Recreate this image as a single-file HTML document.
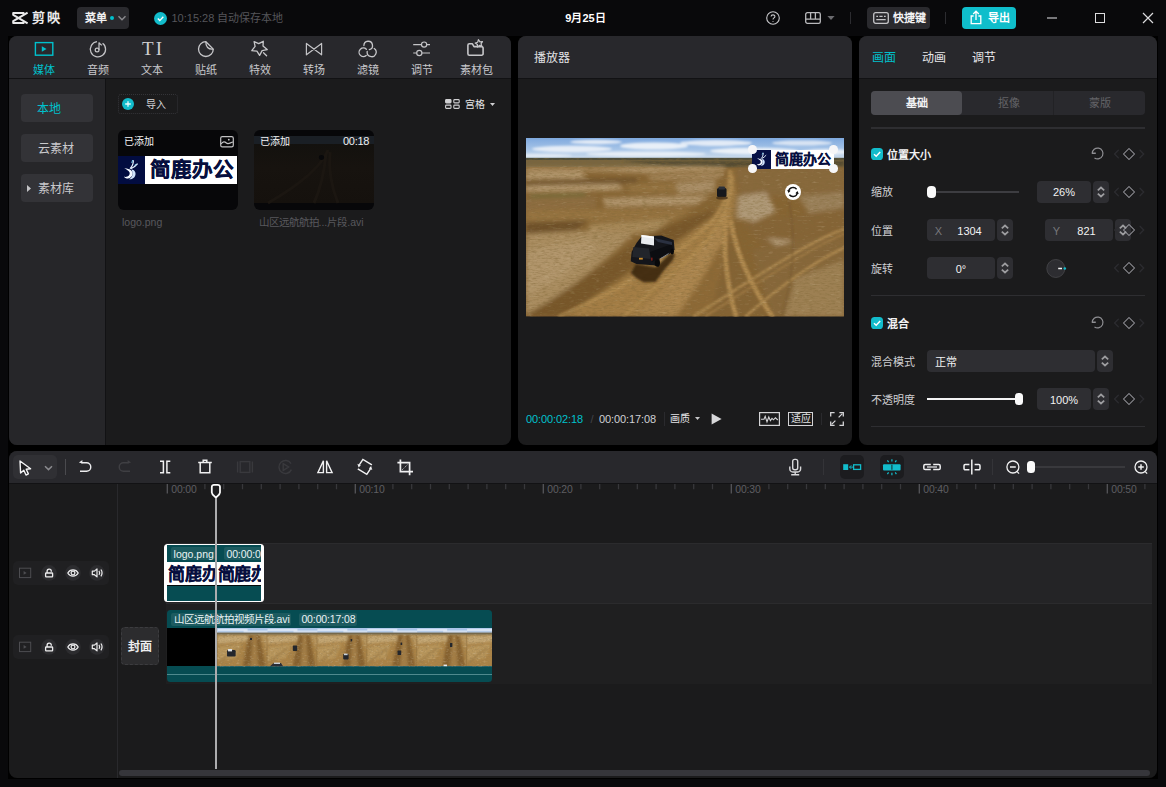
<!DOCTYPE html>
<html lang="zh-CN">
<head>
<meta charset="utf-8">
<title>剪映</title>
<style>
*{box-sizing:border-box;margin:0;padding:0}
html,body{width:1166px;height:787px;overflow:hidden;background:#09090b}
body{font-family:"Liberation Sans",sans-serif;font-size:11px;color:#d8d8da;position:relative;-webkit-font-smoothing:antialiased}
.abs{position:absolute}
.t{position:absolute;white-space:nowrap;line-height:14px;height:14px}
.c{transform:translateX(-50%)}
svg{position:absolute;overflow:visible}
.panel{position:absolute;background:#1b1b1c;border-radius:8px;overflow:hidden}
.phead{position:absolute;left:0;top:0;right:0;height:43px;background:#28282c;border-bottom:1px solid #121214}
.btn{position:absolute;background:#2a2a2e;border-radius:4px}
.sep{position:absolute;width:1px;background:#2c2c30}
.b{font-weight:bold}
.cy{color:#00c1cd}
.w{color:#f2f2f3}
.tl{color:#c9c9cc}
.hd{position:absolute;width:8.6px;height:8.6px;border-radius:50%;background:#f6f6f8}
.lb{color:#cfcfd2}
.ib{position:absolute;height:21.8px;background:#2e2e32;border-radius:4px}
.st{position:absolute;width:16px;height:21.8px;background:#2e2e32;border-radius:4px}
/*SECTION-CSS*/
</style>
</head>
<body>
<!-- ===== TITLE BAR ===== -->
<div id="titlebar" class="abs" style="left:0;top:0;width:1166px;height:36px">
<svg style="left:11px;top:11px" width="18" height="14" viewBox="11 11 18 14" fill="none" stroke="#e9e9ea" stroke-width="2" stroke-linejoin="round" stroke-linecap="butt"><path d="M27.6 12.6 L13.2 21.2 V23 H23.6 V21.4"/><path d="M27.6 23.4 L13.2 14.8 V13 H23.6 V14.6"/></svg>
<div class="t b" style="left:31.5px;top:10px;font-size:13px;line-height:16px;height:16px;letter-spacing:2.2px;color:#e9e9ea">剪映</div>
<div class="btn" style="left:77px;top:7px;width:52px;height:22px"></div>
<div class="t b w" style="left:85px;top:11px">菜单</div>
<div class="abs" style="left:110px;top:16px;width:4px;height:4px;border-radius:2px;background:#00c1cd"></div>
<svg style="left:117px;top:14px" width="10" height="8" viewBox="0 0 10 8" fill="none" stroke="#8a8a8e" stroke-width="1.5"><path d="M1.5 2.3 L5 5.7 L8.5 2.3"/></svg>
<svg style="left:154px;top:12px" width="13" height="13" viewBox="0 0 13 13"><circle cx="6.5" cy="6.5" r="6.5" fill="#12bccb"/><path d="M3.8 6.6 L5.8 8.6 L9.3 4.8" fill="none" stroke="#fff" stroke-width="1.4"/></svg>
<div class="t" style="left:171.5px;top:11px;color:#55555a">10:15:28 自动保存本地</div>
<div class="t b c" style="left:585.5px;top:11px;color:#fff">9月25日</div>
<!-- help -->
<svg style="left:766px;top:11px" width="14" height="14" viewBox="0 0 14 14" fill="none" stroke="#c9c9cc" stroke-width="1.1"><circle cx="7" cy="7" r="6.3"/><path d="M5.1 5.6 C5.1 3.3 8.9 3.3 8.9 5.5 C8.9 7 7 6.9 7 8.6" /><circle cx="7" cy="10.5" r=".55" fill="#c9c9cc" stroke="none"/></svg>
<!-- layout -->
<svg style="left:805px;top:12px" width="16" height="12" viewBox="0 0 16 12" fill="none" stroke="#b9b9bc" stroke-width="1.3"><rect x=".7" y=".7" width="14.6" height="10.6" rx="1.6"/><path d="M.7 7.2 H15.3 M5.6 .7 V7.2 M10.4 .7 V7.2"/></svg>
<svg style="left:827px;top:16px" width="8" height="4" viewBox="0 0 8 4"><path d="M.4 0 H7.6 L4 4Z" fill="#6a6a6e"/></svg>
<div class="sep" style="left:850px;top:12px;height:12px"></div>
<div class="btn" style="left:867px;top:7px;width:63px;height:22px"></div>
<svg style="left:873px;top:12px" width="16" height="12" viewBox="0 0 16 12" fill="none" stroke="#c4c4c7" stroke-width="1.3"><rect x=".7" y=".7" width="14.6" height="10.6" rx="2"/><path d="M3.3 4.3 H5 M6.4 4.3 H9.6 M11 4.3 H12.7 M3.3 7.6 H12.7"/></svg>
<div class="t b w" style="left:892.5px;top:11px">快捷键</div>
<div class="sep" style="left:945px;top:12px;height:12px"></div>
<div class="btn" style="left:962px;top:7px;width:54px;height:22px;background:#0fbecb"></div>
<svg style="left:970px;top:10px" width="12" height="15" viewBox="0 0 12 15" fill="none" stroke="#fff" stroke-width="1.3"><path d="M3.6 6 H1.2 V13.6 H10.8 V6 H8.4"/><path d="M6 10 V1.4 M3.2 4 L6 1.2 L8.8 4"/></svg>
<div class="t b" style="left:987.5px;top:11px;color:#fff">导出</div>
<div class="abs" style="left:1047px;top:17px;width:10px;height:1.5px;background:#77777a"></div>
<div class="abs" style="left:1095px;top:13px;width:10px;height:10px;border:1.3px solid #dcdcde"></div>
<svg style="left:1143px;top:13px" width="10" height="10" viewBox="0 0 10 10" stroke="#dcdcde" stroke-width="1.2"><path d="M0 0 L10 10 M10 0 L0 10"/></svg>

</div>

<div class="abs" style="left:8px;top:36px;width:1150px;height:743px;background:#000"></div>
<!-- ===== MEDIA PANEL ===== -->
<div id="media" class="panel" style="left:9px;top:36px;width:502px;height:409px">
<div class="phead"></div>
<div class="abs" style="left:-9px;top:-36px;width:1166px;height:787px">
<!-- sidebar -->
<div class="abs" style="left:9px;top:79px;width:96px;height:366px;background:#262629"></div>
<div class="abs" style="left:105px;top:79px;width:1px;height:366px;background:#121214"></div>
<!-- tab icons -->
<svg style="left:34px;top:41px" width="20" height="16" viewBox="34 41 20 16" fill="none" stroke="#00c1cd" stroke-width="1.4"><rect x="35.4" y="42.6" width="17.4" height="12.6"/><path d="M41.8 46.3 L46.5 49 L41.8 51.7Z" fill="#00c1cd" stroke="none"/></svg>
<svg style="left:89px;top:40px" width="18" height="18" viewBox="89 40 18 18" fill="none" stroke="#c3c3c6" stroke-width="1.25"><path d="M102.6 43.2 A7.6 7.6 0 1 1 97 41.7"/><circle cx="97.1" cy="50" r="1.9"/><path d="M99 50 V42.6 C99.6 44 101 44.2 101.8 45.4"/></svg>
<div class="t c" style="left:152px;top:38px;font-family:'Liberation Serif',serif;font-size:19px;line-height:22px;height:22px;letter-spacing:2px;color:#cfcfd1;padding-left:2px">TI</div>
<svg style="left:197px;top:40px" width="18" height="18" viewBox="197 40 18 18" fill="none" stroke="#c6c6c9" stroke-width="1.3" stroke-linejoin="round"><path d="M213.3 49.1 A7.4 7.4 0 1 1 205.9 41.7 L213.3 49.1"/><path d="M205.9 41.7 C205.6 46.8 208.2 49.7 213.3 49.1"/></svg>
<svg style="left:250px;top:40px" width="18" height="18" viewBox="250 40 18 18" fill="none" stroke="#c6c6c9" stroke-width="1.3" stroke-linejoin="round" stroke-linecap="round"><path d="M254.1 41.6 L258.7 43.7 L263.3 41.3 L263 46.1 L267.2 49.6 L262.1 50.6 L259.6 55.4 L256.9 51.2 L251.8 50.6 L255.1 46.4 Z"/><path d="M263.5 52.7 L266.6 55.8"/></svg>
<svg style="left:305px;top:42px" width="18" height="14" viewBox="305 42 18 14" fill="none" stroke="#c3c3c6" stroke-width="1.2" stroke-linejoin="round"><path d="M306.4 43.4 L321.6 54.8 V43.4 L306.4 54.8 Z"/></svg>
<svg style="left:358px;top:40px" width="20" height="18" viewBox="358 40 20 18" fill="none" stroke="#c6c6c9" stroke-width="1.3" stroke-linecap="round"><path d="M363.9 45.5 A4.3 4.3 0 1 1 369.3 49.7"/><path d="M366.4 49.2 A4.3 4.3 0 1 0 366.2 55.5"/><path d="M367.2 51.4 A4.5 4.5 0 1 0 374.2 48.5"/></svg>
<svg style="left:412px;top:41px" width="20" height="16" viewBox="412 41 20 16" fill="none" stroke="#c3c3c6" stroke-width="1.2"><path d="M413.2 44.6 H421.4 M426.8 44.6 H430 M413.2 53 H416.6 M422 53 H430"/><circle cx="424.1" cy="44.6" r="2.6"/><circle cx="419.3" cy="53" r="2.6"/></svg>
<svg style="left:466px;top:39px" width="20" height="18" viewBox="466 39 20 18" fill="none" stroke="#c6c6c9" stroke-width="1.6" stroke-linejoin="round"><path d="M469.4 43.8 H472.4 L474 46.6 H481.6 A1.5 1.5 0 0 1 483.1 48.1 V53.7 A1.5 1.5 0 0 1 481.6 55.2 H469.4 A1.5 1.5 0 0 1 467.9 53.7 V45.3 A1.5 1.5 0 0 1 469.4 43.8 Z"/><path d="M478.4 39.7 L479.9 41.8 L482.5 41.7 L481.0 43.8 L481.9 46.2 L479.4 45.4 L477.4 47.0 L477.4 44.4 L475.2 43.0 L477.7 42.2Z" fill="#28282c" stroke-width="1.2"/></svg>
<!-- tab labels -->
<div class="t c cy" style="left:44px;top:62.6px">媒体</div>
<div class="t c tl" style="left:97.5px;top:62.6px">音频</div>
<div class="t c tl" style="left:152px;top:62.6px">文本</div>
<div class="t c tl" style="left:206px;top:62.6px">贴纸</div>
<div class="t c tl" style="left:260px;top:62.6px">特效</div>
<div class="t c tl" style="left:314px;top:62.6px">转场</div>
<div class="t c tl" style="left:368px;top:62.6px">滤镜</div>
<div class="t c tl" style="left:422px;top:62.6px">调节</div>
<div class="t c tl" style="left:476px;top:62.6px">素材包</div>
<!-- sidebar buttons -->
<div class="btn" style="left:21px;top:94px;width:72px;height:28px;background:#333337"></div>
<div class="btn" style="left:21px;top:134px;width:72px;height:28px;background:#333337"></div>
<div class="btn" style="left:21px;top:174px;width:72px;height:28px;background:#333337"></div>
<div class="t cy" style="left:37px;top:102px;font-size:12px">本地</div>
<div class="t" style="left:37.5px;top:142px;font-size:12px;color:#c9c9cc">云素材</div>
<div class="t" style="left:37.5px;top:182px;font-size:12px;color:#c9c9cc">素材库</div>
<svg style="left:27px;top:185px" width="4" height="7" viewBox="0 0 4 7"><path d="M0 0 L4 3.5 L0 7Z" fill="#c4c4c7"/></svg>
<!-- import -->
<div class="abs" style="left:118px;top:94px;width:60px;height:20px;border:1px dotted #343438;border-radius:3px"></div>
<svg style="left:122px;top:98px" width="12" height="12" viewBox="0 0 12 12"><circle cx="6" cy="6" r="6" fill="#12bccb"/><path d="M6 3.2 V8.8 M3.2 6 H8.8" stroke="#e8fbfc" stroke-width="1.3"/></svg>
<div class="t" style="left:146px;top:97.8px;font-size:10px;color:#d4d4d6">导入</div>
<!-- grid toggle -->
<svg style="left:445px;top:99px" width="15" height="10" viewBox="0 0 15 10" fill="none" stroke="#d0d0d2" stroke-width="1.1"><rect x=".6" y=".6" width="5.4" height="3.3" rx=".8" fill="#d0d0d2"/><rect x="8.8" y=".6" width="5.4" height="3.3" rx=".8"/><rect x=".6" y="6.1" width="5.4" height="3.3" rx=".8"/><rect x="8.8" y="6.1" width="5.4" height="3.3" rx=".8"/></svg>
<div class="t" style="left:465px;top:97.5px;font-size:10px;color:#e4e4e6">宫格</div>
<svg style="left:489.5px;top:103px" width="5" height="3" viewBox="0 0 5 3"><path d="M0 0 H5 L2.5 3Z" fill="#d0d0d2"/></svg>
<!-- thumb 1 -->
<div class="abs" style="left:118px;top:130px;width:120px;height:80px;border-radius:6px;background:#070709;overflow:hidden">
  <div class="abs" style="left:0;top:26px;width:27px;height:27.6px;background:#020c40"></div>
  <div class="abs" style="left:27px;top:26px;width:92px;height:27.6px;background:#fff"></div>
  <svg style="left:5px;top:28.5px" width="17" height="22" viewBox="0 0 17 22" fill="none"><path d="M1.2 9 C4.5 9.6 7 10.2 8.2 11.4 C11 13.6 9.8 18.6 4.6 19.6 C2.8 19.8 1.6 18.8 .8 17.6 C3.6 18.6 7.4 17 6.6 13.6 C6 11.6 3.4 10.6 1.2 9Z" fill="#f4f8ff"/><path d="M8.4 10.4 C12.4 10.6 13.8 15 11.4 18.2 C10.2 19.6 8 20.4 6 20.2 C9.6 18.4 10.6 14.4 8.4 10.4Z" fill="#cfe2fb"/><path d="M7 9.6 C9 7.6 10.4 5 10.4 1.2 M7.8 9.8 C10.4 8.6 12.8 7 14.6 4.6" stroke="#e6f2ff" stroke-width="1.2"/><path d="M8.8 4 L9.6 1 M11.4 6.4 L13.4 5.2" stroke="#7fd0f2" stroke-width="1"/></svg>
  <div class="t" style="left:32px;top:26px;font-size:20.6px;line-height:27px;height:27px;font-weight:900;color:#070f3e;letter-spacing:-0.1px;-webkit-text-stroke:.35px #070f3e">简鹿办公</div>
  <div class="t" style="left:5.5px;top:4.5px;font-size:10px;color:#f4f4f5">已添加</div>
  <svg style="left:102px;top:5.5px" width="14" height="12" viewBox="0 0 14 12" fill="none" stroke="#c2c2c4" stroke-width="1.2"><rect x=".7" y=".7" width="12.6" height="10.2" rx="1.6"/><path d="M1 8 C3 5.4 4.6 5.4 6.4 7 C8.2 8.6 10 6.8 13 6"/><circle cx="8.8" cy="3.7" r=".9" fill="#c2c2c4" stroke="none"/></svg>
</div>
<div class="t" style="left:122px;top:215px;font-size:10.5px;color:#58585c">logo.png</div>
<!-- thumb 2 -->
<div class="abs" style="left:254px;top:130px;width:120px;height:80px;border-radius:6px;background:#070709;overflow:hidden">
  <div class="abs" style="left:0;top:5.8px;width:120px;height:8.2px;background:#1a1f25"></div>
  <div class="abs" style="left:0;top:14px;width:120px;height:59px;background:linear-gradient(180deg,#13110e 0%,#17130f 40%,#15110d 100%)"></div>
  <svg style="left:0;top:14px" width="120" height="59" viewBox="0 0 120 59" fill="none"><path d="M74 6 C66 26 40 44 14 59 M76 8 C74 28 78 44 84 59 M72 10 C70 30 66 46 60 59" stroke="#1b1611" stroke-width="3"/><ellipse cx="67.5" cy="13.5" rx="2.6" ry="2.4" fill="#08080a"/></svg>
  <div class="t" style="left:5.5px;top:4.5px;font-size:10px;color:#f4f4f5">已添加</div>
  <div class="t" style="left:89px;top:4px;font-size:11px;color:#f0f0f2;letter-spacing:-0.3px">00:18</div>
</div>
<div class="t" style="left:258.5px;top:215px;font-size:10.5px;color:#58585c">山区远航航拍...片段.avi</div>

</div>

</div>

<!-- ===== PLAYER PANEL ===== -->
<div id="player" class="panel" style="left:518px;top:36px;width:334px;height:409px">
<div class="phead"></div>
<div class="abs" style="left:-518px;top:-36px;width:1166px;height:787px">
<div class="t" style="left:534px;top:51px;font-size:12px;color:#e2e2e4">播放器</div>
<!-- video -->
<svg style="left:526px;top:138px" width="318" height="178.5" viewBox="0 0 318 178.5" preserveAspectRatio="none">
<defs>
<linearGradient id="sky" x1="0" y1="0" x2="0" y2="1"><stop offset="0" stop-color="#7fa9de"/><stop offset=".55" stop-color="#a9c6e8"/><stop offset="1" stop-color="#d2dfec"/></linearGradient>
<filter id="b1" x="-20%" y="-20%" width="140%" height="140%"><feGaussianBlur stdDeviation="1"/></filter>
<filter id="b2" x="-20%" y="-20%" width="140%" height="140%"><feGaussianBlur stdDeviation="2"/></filter>
<filter id="b3" x="-20%" y="-20%" width="140%" height="140%"><feGaussianBlur stdDeviation="3.2"/></filter>
<filter id="nz" x="0" y="0" width="100%" height="100%"><feTurbulence type="fractalNoise" baseFrequency="0.18 0.7" numOctaves="3" seed="11" result="n"/><feColorMatrix in="n" type="matrix" values="0 0 0 0 .22  0 0 0 0 .14  0 0 0 0 .04  0 0 0 -2.2 1.25"/></filter>
<filter id="nl" x="0" y="0" width="100%" height="100%"><feTurbulence type="fractalNoise" baseFrequency="0.12 0.5" numOctaves="3" seed="23" result="n"/><feColorMatrix in="n" type="matrix" values="0 0 0 0 .86  0 0 0 0 .76  0 0 0 0 .58  0 0 0 2.4 -1.45"/></filter>
<clipPath id="vc"><rect width="318" height="178.5"/></clipPath>
</defs>
<g clip-path="url(#vc)">
<rect width="318" height="22" fill="url(#sky)"/>
<g filter="url(#b1)" fill="#f6f8fb">
<ellipse cx="46" cy="11" rx="40" ry="3.2" opacity=".8"/><ellipse cx="70" cy="4" rx="26" ry="2.2" opacity=".8"/><ellipse cx="128" cy="8" rx="34" ry="3.6" opacity=".85"/><ellipse cx="120" cy="16" rx="60" ry="2.6" opacity=".75"/><ellipse cx="190" cy="5" rx="36" ry="3" opacity=".8"/><ellipse cx="228" cy="13" rx="44" ry="3.2" opacity=".85"/><ellipse cx="276" cy="5" rx="30" ry="2.6" opacity=".7"/><ellipse cx="300" cy="14" rx="24" ry="3" opacity=".8"/><ellipse cx="16" cy="17.5" rx="30" ry="1.8" opacity=".6"/>
</g>
<rect y="20.5" width="318" height="158" fill="#8c6a39"/>
<!-- horizon -->
<rect y="19.8" width="318" height="2.6" fill="#4e5141"/>
<rect y="22" width="318" height="7" fill="#7b6c49"/>
<path d="M96 23 H318 V29 H150 Z" fill="#514d38" filter="url(#b1)"/>
<g filter="url(#b2)">
<path d="M0 30 H66 L170 28 L200 29 L198 33 L120 35 L60 33 L0 34Z" fill="#bfa47c"/>
<path d="M0 35 L56 34 L60 40 L0 41Z" fill="#c4ab84"/>
<path d="M120 38 L198 35 L194 40 L126 42Z" fill="#b99d74"/>
<path d="M0 43 L110 40 L112 45 L0 47Z" fill="#6f5431"/>
<path d="M0 48 L92 46 L98 52 L0 54Z" fill="#c2a983"/>
<path d="M100 46 L190 44 L184 54 L104 55Z" fill="#9c7b4a"/>
<path d="M4 57 L60 55 L60 58 L4 60Z" fill="#6f7440"/>
<path d="M0 60 L70 58 L70 70 L0 72Z" fill="#94744a"/>
<path d="M76 60 L184 57 L170 67 L80 69Z" fill="#bca27c"/>
<path d="M0 72 L168 70 L150 82 L0 84Z" fill="#9f7d4a"/>
<path d="M0 84 L62 82 L50 92 L0 96Z" fill="#70532f"/>
<path d="M64 86 L146 81 L128 94 L60 98Z" fill="#b39666"/>
<!-- left big light patch -->
<path d="M0 96 L56 93 L108 95 L90 112 L64 134 L30 160 L0 176Z" fill="#b59a6e"/>
<path d="M0 112 L56 102 L74 108 L36 140 L0 158Z" fill="#bfa57c"/>
<!-- dark wet diagonal -->
<path d="M0 178.5 L40 152 L84 122 L118 98 L158 82 L186 72 L190 77 L156 98 L112 126 L70 156 L40 178.5Z" fill="#7a5a2f"/>
<!-- main road tan -->
<path d="M40 178.5 L104 136 L158 100 L190 76 L200 56 L203 32 L207 32 L210 56 L206 90 L196 130 L186 160 L182 178.5Z" fill="#ae8850"/>
<path d="M112 178.5 L154 130 L190 92 L200 72 L200 100 L186 140 L166 178.5Z" fill="#b8925a"/><path d="M150 178.5 L176 140 L196 104 L200 120 L192 150 L184 178.5Z" fill="#94713e"/>
<!-- between right tracks -->
<path d="M184 178.5 L196 130 L204 84 L214 120 L232 160 L240 178.5Z" fill="#8a693a"/>
<!-- right region -->
<path d="M210 30 L318 29 L318 58 L214 58Z" fill="#8e6f45"/>
<path d="M212 58 L240 54 L250 74 L228 84 L210 80Z" fill="#bca88a"/>
<path d="M272 58 L318 54 L318 82 L286 80Z" fill="#a48c68"/>
<path d="M218 86 L318 70 L318 100 L240 112Z" fill="#8b6b3e"/>
<path d="M240 100 L262 102 L284 110 L256 112Z" fill="#bfa988"/>
<path d="M226 112 L300 98 L318 102 L318 178.5 L246 178.5Z" fill="#8d6e42"/>
<path d="M270 140 L318 122 L318 178.5 L258 178.5Z" fill="#a78c61"/>
<path d="M150 44 L190 42 L188 54 L152 56Z" fill="#b59b76"/>
</g>
<!-- tracks -->
<g fill="none" stroke="#c29b5e" stroke-linecap="round" filter="url(#b1)">
<path d="M204 34 C206 50 200 68 184 86 C150 120 92 152 34 178" stroke-width="4" opacity=".7"/>
<path d="M206 40 C206 70 190 98 150 132 C130 149 112 165 98 178" stroke-width="3.4" opacity=".65"/>
<path d="M199 76 C197 110 201 150 210 178" stroke-width="4.6" stroke="#bf985b"/>
<path d="M205 84 C211 120 228 152 246 178" stroke-width="4.6" stroke="#bf985b"/>
<path d="M318 91 C282 104 232 138 168 178" stroke-width="2.6" stroke="#bb965c"/>
<path d="M318 96 C284 110 240 140 180 178" stroke-width="1.6" stroke="#b08a52"/>
<path d="M318 110 C290 122 252 150 220 178" stroke-width="2.6" stroke="#bb965c"/>
<path d="M262 60 C270 90 268 140 256 178" stroke-width="1" stroke="#6f5230" opacity=".8"/>
</g>
<rect width="318" height="158" y="20.5" fill="#6b4210" opacity=".16"/>
<rect width="318" height="158" y="20.5" filter="url(#nz)" opacity=".5"/>
<rect width="318" height="158" y="26" filter="url(#nl)" opacity=".22"/>
<!-- far car -->
<rect x="191" y="50" width="9.5" height="9" rx="1.5" fill="#17181c"/><rect x="192.5" y="48.6" width="6.5" height="3" rx="1" fill="#2c3038"/>
<ellipse cx="196" cy="60" rx="6" ry="1.6" fill="#3d2a14" opacity=".7"/>
<!-- SUV shadow -->
<path d="M104.7 134.9 L109.7 126 L130 129 L143.5 115.9 L149.6 115.6 L147 122 L138.6 131.6 L129.5 144 L117.9 144.4 L110 140Z" fill="#3a2710" opacity=".9" filter="url(#b1)"/>
<!-- SUV -->
<path d="M104.7 123.3 L105.6 114 L110.5 105 L115.5 98.4 L135.3 97.4 L147.7 101.9 L148.6 111.8 L143.5 116 L133.6 120.4 L132.8 128.6 L127 127.2 L110.5 126Z" fill="#14151a"/>
<path d="M107.4 109 L123 110.6 L124.6 121 L106.4 119Z" fill="#22252b"/>
<path d="M124 114 L146 106 L147 112 L126 124Z" fill="#0c0d11"/>
<path d="M128 100 L146 104 L146 107 L132 104Z" fill="#2a3040"/>
<ellipse cx="131.4" cy="125" rx="2.6" ry="3.8" fill="#08080a"/><ellipse cx="146.2" cy="113.6" rx="1.8" ry="2.8" fill="#08080a"/>
<path d="M115.5 97 L128 98.6 L128 107.5 L115 105.6Z" fill="#e9ebee"/><path d="M115.5 97 L128 98.6 L128 100.4 L115.4 98.8Z" fill="#fbfbfc"/>
<rect x="113" y="119.8" width="3.8" height="1.8" fill="#c98a2a"/><rect x="125" y="119.6" width="1.6" height="3" fill="#7a1c18"/>
<path d="M134.6 120.6 L142.6 115.6" stroke="#8a8e96" stroke-width=".9"/>
</g>
</svg>
<!-- logo overlay -->
<div class="abs" style="left:752px;top:150px;width:81.5px;height:19px;background:#fff;overflow:hidden">
  <div class="abs" style="left:0;top:0;width:19px;height:19px;background:#061046"></div>
  <svg style="left:3.5px;top:2px" width="12" height="15" viewBox="0 0 17 22" fill="none"><path d="M1.2 9 C4.5 9.6 7 10.2 8.2 11.4 C11 13.6 9.8 18.6 4.6 19.6 C2.8 19.8 1.6 18.8 .8 17.6 C3.6 18.6 7.4 17 6.6 13.6 C6 11.6 3.4 10.6 1.2 9Z" fill="#f4f8ff"/><path d="M8.4 10.4 C12.4 10.6 13.8 15 11.4 18.2 C10.2 19.6 8 20.4 6 20.2 C9.6 18.4 10.6 14.4 8.4 10.4Z" fill="#cfe2fb"/><path d="M7 9.6 C9 7.6 10.4 5 10.4 1.2 M7.8 9.8 C10.4 8.6 12.8 7 14.6 4.6" stroke="#e6f2ff" stroke-width="1.4"/><path d="M8.8 4 L9.6 1" stroke="#7fd0f2" stroke-width="1.2"/></svg>
  <div class="t" style="left:22.5px;top:0;font-size:14px;line-height:19px;height:19px;font-weight:900;color:#070f3e;-webkit-text-stroke:.15px #070f3e">简鹿办公</div>
</div>
<div class="hd" style="left:748px;top:145.3px"></div><div class="hd" style="left:829.2px;top:145.3px"></div><div class="hd" style="left:748px;top:164.4px"></div><div class="hd" style="left:829.2px;top:164.4px"></div>
<svg style="left:785px;top:184px" width="16" height="16" viewBox="0 0 16 16"><circle cx="8" cy="8" r="8" fill="#fff"/><g fill="none" stroke="#111" stroke-width="1.4"><path d="M3.6 7.4 A4.5 4.5 0 0 1 11.6 5.2"/><path d="M12.4 8.6 A4.5 4.5 0 0 1 4.4 10.8"/></g><path d="M2.2 6 L3.5 8.9 L5.6 6.8Z M13.8 10 L12.5 7.1 L10.4 9.2Z" fill="#111"/></svg>
<!-- controls -->
<div class="t cy" style="left:526px;top:412px;letter-spacing:-0.1px">00:00:02:18</div>
<div class="t" style="left:590.5px;top:412px;color:#444448">/</div>
<div class="t" style="left:599px;top:412px;color:#d0d0d3;letter-spacing:-0.1px">00:00:17:08</div>
<div class="sep" style="left:664px;top:412px;height:14px;background:#2a2a2d"></div>
<div class="t" style="left:670px;top:412px;font-size:10px;color:#e4e4e6">画质</div>
<svg style="left:695px;top:416.5px" width="5" height="3" viewBox="0 0 5 3"><path d="M0 0 H5 L2.5 3Z" fill="#c8c8ca"/></svg>
<svg style="left:711px;top:413px" width="11" height="12" viewBox="0 0 11 12"><path d="M.6 .4 L10.6 6 L.6 11.6Z" fill="#d8d8da"/></svg>
<svg style="left:759px;top:412px" width="21" height="14" viewBox="0 0 21 14" fill="none" stroke="#d4d4d6" stroke-width="1.2"><rect x=".6" y=".6" width="19.8" height="12.8"/><path d="M2 7.2 H5 L6.2 4.4 L8 9.8 L9.8 5 L11.4 8.6 L13 6.4 L14.4 7.8 L16.4 5.8 L18.8 8" stroke-width="1.1"/></svg>
<div class="abs" style="left:788px;top:412px;width:25px;height:14px;border:1.2px solid #d4d4d6"></div>
<div class="t" style="left:790.5px;top:412px;font-size:10px;color:#e4e4e6">适应</div>
<div class="sep" style="left:821px;top:413px;height:12px;background:#2a2a2d"></div>
<svg style="left:830px;top:412px" width="14" height="14" viewBox="0 0 14 14" fill="none" stroke="#d4d4d6" stroke-width="1.3"><path d="M.7 4.6 V.7 H4.6 M9.4 .7 H13.3 V4.6 M13.3 9.4 V13.3 H9.4 M4.6 13.3 H.7 V9.4"/><path d="M8.6 5.4 L12.4 1.6 M5.4 8.6 L1.6 12.4"/></svg>
</div>

</div>

<!-- ===== PROPERTIES PANEL ===== -->
<div id="props" class="panel" style="left:859px;top:36px;width:298px;height:409px">
<div class="phead"></div>
<div class="abs" style="left:-859px;top:-36px;width:1166px;height:787px">
<div class="t cy" style="left:872px;top:51px;font-size:12px">画面</div>
<div class="t" style="left:922px;top:51px;font-size:12px;color:#e6e6e8">动画</div>
<div class="t" style="left:972px;top:51px;font-size:12px;color:#e6e6e8">调节</div>
<!-- segmented -->
<div class="abs" style="left:871px;top:91px;width:274px;height:24px;background:#29292d;border-radius:4px"></div>
<div class="abs" style="left:871px;top:91px;width:91px;height:24px;background:#4c4c51;border-radius:4px"></div>
<div class="abs" style="left:1053px;top:91px;width:1px;height:24px;background:#222225"></div>
<div class="t c b w" style="left:916.5px;top:96px">基础</div>
<div class="t c" style="left:1008.5px;top:96px;color:#636367">抠像</div>
<div class="t c" style="left:1099.5px;top:96px;color:#636367">蒙版</div>
<div class="abs" style="left:871px;top:127px;width:274px;height:2px;background:#2e2e31"></div>
<!-- 位置大小 -->
<svg class="ck" style="left:871px;top:148px" width="12" height="12" viewBox="0 0 12 12"><rect width="12" height="12" rx="3.6" fill="#12bccb"/><path d="M3 6.2 L5.2 8.3 L9.2 4" fill="none" stroke="#fff" stroke-width="1.5"/></svg>
<div class="t b w" style="left:887px;top:147.5px">位置大小</div>
<svg class="rs" style="left:1091px;top:147.3px" width="13" height="13" viewBox="0 0 13 13" fill="none" stroke="#8f8f93" stroke-width="1.2"><path d="M1.2 6.5 A5.4 5.4 0 1 1 3.5 10.9"/><path d="M.9 6.2 H4.8" stroke-width="1.5"/></svg>
<svg class="kf" style="left:1114px;top:148px" width="30" height="12" viewBox="0 0 30 12" fill="none"><path d="M4.3 2.2 L.6 6 L4.3 9.8 M26 2.2 L29.7 6 L26 9.8" stroke="#2c2c30" stroke-width="1.3" stroke-linecap="round"/><path d="M15 .5 L20.5 6 L15 11.5 L9.5 6Z" stroke="#9a9aa1" stroke-width="1.05" stroke-linejoin="round"/></svg>
<!-- 缩放 -->
<div class="t lb" style="left:871px;top:184.5px">缩放</div>
<div class="abs" style="left:927px;top:191px;width:92px;height:1.5px;background:#3d3d41"></div>
<div class="abs" style="left:927.2px;top:185.6px;width:8.8px;height:12.2px;border-radius:4px;background:#fafafa"></div>
<div class="ib" style="left:1037px;top:181px;width:54px"></div>
<div class="t c w" style="left:1064px;top:184.5px">26%</div>
<div class="st" style="left:1093px;top:181px"><svg style="left:4px;top:4.8px" width="8" height="12" viewBox="0 0 8 12" fill="none" stroke="#9d9da0" stroke-width="1.7"><path d="M.8 4.4 L4 1.5 L7.2 4.4 M.8 7.6 L4 10.5 L7.2 7.6"/></svg></div>
<svg class="kf" style="left:1114px;top:185.5px" width="30" height="12" viewBox="0 0 30 12" fill="none"><path d="M4.3 2.2 L.6 6 L4.3 9.8 M26 2.2 L29.7 6 L26 9.8" stroke="#2c2c30" stroke-width="1.3" stroke-linecap="round"/><path d="M15 .5 L20.5 6 L15 11.5 L9.5 6Z" stroke="#9a9aa1" stroke-width="1.05" stroke-linejoin="round"/></svg>
<!-- 位置 -->
<div class="t lb" style="left:871px;top:224px">位置</div>
<div class="ib" style="left:927px;top:219px;width:68px"></div>
<div class="t c" style="left:938.5px;top:224px;color:#77777b">X</div>
<div class="t c w" style="left:969.5px;top:224px">1304</div>
<div class="st" style="left:997px;top:219px"><svg style="left:4px;top:4.8px" width="8" height="12" viewBox="0 0 8 12" fill="none" stroke="#9d9da0" stroke-width="1.7"><path d="M.8 4.4 L4 1.5 L7.2 4.4 M.8 7.6 L4 10.5 L7.2 7.6"/></svg></div>
<div class="ib" style="left:1045px;top:219px;width:68px"></div>
<div class="t c" style="left:1056.5px;top:224px;color:#77777b">Y</div>
<div class="t c w" style="left:1086.5px;top:224px">821</div>
<div class="st" style="left:1115px;top:219px"><svg style="left:4px;top:4.8px" width="8" height="12" viewBox="0 0 8 12" fill="none" stroke="#9d9da0" stroke-width="1.7"><path d="M.8 4.4 L4 1.5 L7.2 4.4 M.8 7.6 L4 10.5 L7.2 7.6"/></svg></div>
<svg class="kf" style="left:1114px;top:224px" width="30" height="12" viewBox="0 0 30 12" fill="none"><path d="M4.3 2.2 L.6 6 L4.3 9.8 M26 2.2 L29.7 6 L26 9.8" stroke="#2c2c30" stroke-width="1.3" stroke-linecap="round"/><path d="M15 .5 L20.5 6 L15 11.5 L9.5 6Z" stroke="#9a9aa1" stroke-width="1.05" stroke-linejoin="round"/></svg>
<!-- 旋转 -->
<div class="t lb" style="left:871px;top:261.7px">旋转</div>
<div class="ib" style="left:927px;top:257px;width:68px"></div>
<div class="t c w" style="left:961px;top:261.7px">0°</div>
<div class="st" style="left:997px;top:257px"><svg style="left:4px;top:4.8px" width="8" height="12" viewBox="0 0 8 12" fill="none" stroke="#9d9da0" stroke-width="1.7"><path d="M.8 4.4 L4 1.5 L7.2 4.4 M.8 7.6 L4 10.5 L7.2 7.6"/></svg></div>
<svg style="left:1046px;top:258.5px" width="20" height="19" viewBox="0 0 20 19"><circle cx="9.8" cy="9.5" r="9" fill="#2d2d31" stroke="#47474b" stroke-width=".8"/><path d="M12.2 9.5 H16" stroke="#f2f2f3" stroke-width="1.3"/><circle cx="18.8" cy="9.5" r="1.3" fill="#12bccb"/></svg>
<svg class="kf" style="left:1114px;top:262px" width="30" height="12" viewBox="0 0 30 12" fill="none"><path d="M4.3 2.2 L.6 6 L4.3 9.8 M26 2.2 L29.7 6 L26 9.8" stroke="#2c2c30" stroke-width="1.3" stroke-linecap="round"/><path d="M15 .5 L20.5 6 L15 11.5 L9.5 6Z" stroke="#9a9aa1" stroke-width="1.05" stroke-linejoin="round"/></svg>
<div class="abs" style="left:871px;top:295px;width:274px;height:1px;background:#2e2e31"></div>
<!-- 混合 -->
<svg class="ck" style="left:871px;top:317px" width="12" height="12" viewBox="0 0 12 12"><rect width="12" height="12" rx="3.6" fill="#12bccb"/><path d="M3 6.2 L5.2 8.3 L9.2 4" fill="none" stroke="#fff" stroke-width="1.5"/></svg>
<div class="t b w" style="left:887px;top:316.5px">混合</div>
<svg class="rs" style="left:1091px;top:316.3px" width="13" height="13" viewBox="0 0 13 13" fill="none" stroke="#8f8f93" stroke-width="1.2"><path d="M1.2 6.5 A5.4 5.4 0 1 1 3.5 10.9"/><path d="M.9 6.2 H4.8" stroke-width="1.5"/></svg>
<svg class="kf" style="left:1114px;top:317px" width="30" height="12" viewBox="0 0 30 12" fill="none"><path d="M4.3 2.2 L.6 6 L4.3 9.8 M26 2.2 L29.7 6 L26 9.8" stroke="#2c2c30" stroke-width="1.3" stroke-linecap="round"/><path d="M15 .5 L20.5 6 L15 11.5 L9.5 6Z" stroke="#9a9aa1" stroke-width="1.05" stroke-linejoin="round"/></svg>
<!-- 混合模式 -->
<div class="t lb" style="left:871px;top:355px">混合模式</div>
<div class="ib" style="left:927px;top:350px;width:168px"></div>
<div class="t w" style="left:935px;top:355px">正常</div>
<div class="st" style="left:1097px;top:350px"><svg style="left:4px;top:4.8px" width="8" height="12" viewBox="0 0 8 12" fill="none" stroke="#9d9da0" stroke-width="1.7"><path d="M.8 4.4 L4 1.5 L7.2 4.4 M.8 7.6 L4 10.5 L7.2 7.6"/></svg></div>
<!-- 不透明度 -->
<div class="t lb" style="left:871px;top:393px">不透明度</div>
<div class="abs" style="left:927px;top:398px;width:92px;height:2px;background:#f4f4f5"></div>
<div class="abs" style="left:1015px;top:393px;width:8.2px;height:12.2px;border-radius:3.5px;background:#fafafa"></div>
<div class="ib" style="left:1037px;top:388px;width:54px"></div>
<div class="t c w" style="left:1064px;top:393px">100%</div>
<div class="st" style="left:1093px;top:388px"><svg style="left:4px;top:4.8px" width="8" height="12" viewBox="0 0 8 12" fill="none" stroke="#9d9da0" stroke-width="1.7"><path d="M.8 4.4 L4 1.5 L7.2 4.4 M.8 7.6 L4 10.5 L7.2 7.6"/></svg></div>
<svg class="kf" style="left:1114px;top:393px" width="30" height="12" viewBox="0 0 30 12" fill="none"><path d="M4.3 2.2 L.6 6 L4.3 9.8 M26 2.2 L29.7 6 L26 9.8" stroke="#2c2c30" stroke-width="1.3" stroke-linecap="round"/><path d="M15 .5 L20.5 6 L15 11.5 L9.5 6Z" stroke="#9a9aa1" stroke-width="1.05" stroke-linejoin="round"/></svg>
<div class="abs" style="left:871px;top:426px;width:274px;height:1px;background:#2e2e31"></div>
</div>

</div>

<!-- ===== TIMELINE PANEL ===== -->
<div id="timeline" class="panel" style="left:9px;top:451px;width:1148px;height:327px">
<div class="abs" style="left:0;top:0;right:0;height:33px;background:#28282c;border-bottom:1px solid #121214"></div>
<div class="abs" style="left:-9px;top:-451px;width:1166px;height:787px">
<div class="btn" style="left:13px;top:455px;width:44px;height:24px;background:#303034;border-radius:5px"></div>
<svg style="left:19px;top:459.5px" width="13" height="16" viewBox="0 0 13 16" fill="#1f1f22" stroke="#f4f4f5" stroke-width="1.4" stroke-linejoin="round"><path d="M1 1 L1.6 13 L4.8 10.2 L7 15 L9.4 13.9 L7.2 9.2 L11.6 8.8 Z"/></svg>
<svg style="left:43.5px;top:465px" width="9" height="6" viewBox="0 0 9 6" fill="none" stroke="#8a8a8e" stroke-width="1.5"><path d="M1 1.2 L4.5 4.6 L8 1.2"/></svg>
<div class="sep" style="left:65px;top:459px;height:16px;background:#4a4a4e"></div>
<svg style="left:78px;top:459px" width="14" height="15" viewBox="78 459 14 15" fill="none" stroke="#ececee" stroke-width="1.4"><path d="M81.4 462.7 H86.5 A4.3 4.3 0 0 1 86.5 471.3 H80"/><path d="M78.9 462.6 L82.4 459.9 L82.4 463.6Z" fill="#ececee" stroke="none"/></svg>
<svg style="left:118px;top:459px" width="14" height="15" viewBox="118 459 14 15" fill="none" stroke="#3f3f43" stroke-width="1.4"><path d="M128.6 462.7 H123.5 A4.3 4.3 0 0 0 123.5 471.3 H130"/><path d="M131.1 462.6 L127.6 459.9 L127.6 463.6Z" fill="#3f3f43" stroke="none"/></svg>
<svg style="left:159px;top:460px" width="12" height="14" viewBox="159 460 12 14" fill="none" stroke="#f0f0f1" stroke-width="1.5"><path d="M160 461.3 H163.4 V472.7 H160 M170.3 461.3 H166.9 V472.7 H170.3"/></svg>
<svg style="left:197px;top:459px" width="16" height="16" viewBox="197 459 16 16" fill="none" stroke="#f0f0f1" stroke-width="1.5"><path d="M198.2 462.4 H211.8 M203.2 462 V460.2 H206.8 V462"/><path d="M200.2 463 V472.8 H209.8 V463"/></svg>
<svg style="left:236px;top:460px" width="18" height="14" viewBox="236 460 18 14" fill="none" stroke="#39393d" stroke-width="1.4"><rect x="240.2" y="461.6" width="9.6" height="10.8"/><path d="M237.6 461.4 V472.6 M252.4 461.4 V472.6"/></svg>
<svg style="left:277px;top:459px" width="16" height="16" viewBox="277 459 16 16" fill="none" stroke="#39393d" stroke-width="1.4"><path d="M291 463.6 A6.5 6.5 0 1 0 291.4 469.6"/><path d="M283.2 463.6 L288.6 467 L283.2 470.4Z"/></svg>
<svg style="left:316px;top:458px" width="18" height="16" viewBox="316 458 18 16" fill="none" stroke="#f0f0f1" stroke-width="1.4" stroke-linejoin="miter"><path d="M323.4 460.8 V472.6 H317.9 Z M326.6 460.8 V472.6 H332.1 Z"/></svg>
<svg style="left:356px;top:458px" width="18" height="18" viewBox="356 458 18 18" fill="none" stroke="#f0f0f1" stroke-width="1.5" stroke-linejoin="miter"><path d="M359.3 464.8 L362.9 459.4 L371.9 464.8"/><path d="M357.8 468.9 L366.8 474.3 L370.4 468.9"/><path d="M357.4 463.8 L360.8 465.2 L358.6 467.6Z M372.3 469.9 L368.9 468.5 L371.1 466.1Z" fill="#f0f0f1" stroke="none"/></svg>
<svg style="left:396px;top:458px" width="18" height="18" viewBox="396 458 18 18" fill="none" stroke="#f0f0f1" stroke-width="1.7"><path d="M400.4 459.4 V471.6 H413 M397.4 462.6 H409.6 V475.2"/><path d="M402 470 L408.2 464" stroke-width="1" stroke="#b5b5b8" stroke-dasharray="1.2 .9"/></svg>
<svg style="left:788px;top:458px" width="14" height="18" viewBox="788 458 14 18" fill="none" stroke="#d8d8da" stroke-width="1.4"><rect x="792.7" y="459.4" width="5" height="10.4" rx="2"/><path d="M789.8 466.4 V469 A3 3 0 0 0 792.8 472 H797.6 A3 3 0 0 0 800.6 469 V466.4"/><path d="M795.2 472 V474.6 M791.2 474.8 H799.2"/></svg>
<div class="sep" style="left:823px;top:459px;height:16px;background:#343438"></div>
<div class="btn" style="left:840px;top:455px;width:24px;height:24px;background:#1c1c1f;border-radius:5px"></div>
<svg style="left:842px;top:463px" width="20" height="8" viewBox="842 463 20 8" fill="none" stroke="#12bccb" stroke-width="1.3"><rect x="843.2" y="464.2" width="5" height="5.8" fill="#12bccb" stroke="none"/><rect x="853.6" y="464.8" width="7" height="4.6"/><path d="M853 467.1 H849.6 M851.2 465.4 L849.5 467.1 L851.2 468.8" stroke-width="1"/></svg>
<div class="btn" style="left:880px;top:455px;width:24px;height:24px;background:#1c1c1f;border-radius:5px"></div>
<svg style="left:882px;top:458px" width="20" height="18" viewBox="882 458 20 18" fill="none" stroke="#12bccb" stroke-width="1.2"><rect x="883" y="464.2" width="17.6" height="6.2" rx="1" fill="#12bccb" stroke="none"/><path d="M891.9 464.8 V469.8" stroke="#13363a" stroke-width="1.1"/><path d="M891.9 459.2 V461.6 M887.4 460.4 L888.6 462.2 M896.4 460.4 L895.2 462.2 M891.9 472.8 V475.2 M887.4 474.2 L888.6 472.4 M896.4 474.2 L895.2 472.4"/></svg>
<svg style="left:922px;top:463px" width="20" height="8" viewBox="922 463 20 8" fill="none" stroke="#f0f0f1" stroke-width="1.5"><path d="M930.8 464.6 H925.2 A1.4 1.4 0 0 0 923.8 466 V468.2 A1.4 1.4 0 0 0 925.2 469.6 H930.8 M933.2 464.6 H938.8 A1.4 1.4 0 0 1 940.2 466 V468.2 A1.4 1.4 0 0 1 938.8 469.6 H933.2"/><path d="M927 467.1 H937" stroke="#c9c9cb"/></svg>
<svg style="left:962px;top:459px" width="20" height="16" viewBox="962 459 20 16" fill="none" stroke="#f0f0f1" stroke-width="1.5"><path d="M971.8 459.6 V474.6"/><path d="M969.4 464.6 H965.2 A1.2 1.2 0 0 0 964 465.8 V468.6 A1.2 1.2 0 0 0 965.2 469.8 H969.4 M974.6 464.6 H978.8 A1.2 1.2 0 0 1 980 465.8 V468.6 A1.2 1.2 0 0 1 978.8 469.8 H974.6"/></svg>
<div class="sep" style="left:992px;top:459px;height:16px;background:#343438"></div>
<svg style="left:1005px;top:459px" width="16" height="16" viewBox="1005 459 16 16" fill="none" stroke="#f0f0f1" stroke-width="1.3"><circle cx="1012.9" cy="467" r="6"/><path d="M1010 467 H1015.8" stroke-width="1.5"/><path d="M1017.2 471.6 L1019 473.6"/></svg>
<div class="abs" style="left:1035px;top:466.3px;width:90px;height:1.5px;background:#39393d"></div>
<div class="abs" style="left:1026.6px;top:461px;width:8.6px;height:12.2px;border-radius:3.5px;background:#fafafa"></div>
<svg style="left:1133px;top:459px" width="16" height="16" viewBox="1133 459 16 16" fill="none" stroke="#f0f0f1" stroke-width="1.3"><circle cx="1141" cy="467" r="6"/><path d="M1138.2 467 H1143.8 M1141 464.2 V469.8" stroke-width="1.5"/><path d="M1145.3 471.6 L1147.1 473.6"/></svg>
<div class="abs" style="left:117px;top:484px;width:1px;height:294px;background:#29292c"></div>
<svg style="left:0;top:0" width="1166" height="500" viewBox="0 0 1166 500" fill="none" stroke-width="1.3"><path d="M167.3 484 V493.6" stroke="#56565a"/><path d="M204.9 484 V489.2" stroke="#38383b"/><path d="M223.7 484 V489.2" stroke="#38383b"/><path d="M242.5 484 V489.2" stroke="#38383b"/><path d="M261.3 484 V489.2" stroke="#38383b"/><path d="M280.1 484 V489.2" stroke="#38383b"/><path d="M298.9 484 V489.2" stroke="#38383b"/><path d="M317.7 484 V489.2" stroke="#38383b"/><path d="M336.5 484 V489.2" stroke="#38383b"/><path d="M355.3 484 V493.6" stroke="#56565a"/><path d="M392.9 484 V489.2" stroke="#38383b"/><path d="M411.7 484 V489.2" stroke="#38383b"/><path d="M430.5 484 V489.2" stroke="#38383b"/><path d="M449.3 484 V489.2" stroke="#38383b"/><path d="M468.1 484 V489.2" stroke="#38383b"/><path d="M486.9 484 V489.2" stroke="#38383b"/><path d="M505.7 484 V489.2" stroke="#38383b"/><path d="M524.5 484 V489.2" stroke="#38383b"/><path d="M543.3 484 V493.6" stroke="#56565a"/><path d="M580.9 484 V489.2" stroke="#38383b"/><path d="M599.7 484 V489.2" stroke="#38383b"/><path d="M618.5 484 V489.2" stroke="#38383b"/><path d="M637.3 484 V489.2" stroke="#38383b"/><path d="M656.1 484 V489.2" stroke="#38383b"/><path d="M674.9 484 V489.2" stroke="#38383b"/><path d="M693.7 484 V489.2" stroke="#38383b"/><path d="M712.5 484 V489.2" stroke="#38383b"/><path d="M731.3 484 V493.6" stroke="#56565a"/><path d="M768.9 484 V489.2" stroke="#38383b"/><path d="M787.7 484 V489.2" stroke="#38383b"/><path d="M806.5 484 V489.2" stroke="#38383b"/><path d="M825.3 484 V489.2" stroke="#38383b"/><path d="M844.1 484 V489.2" stroke="#38383b"/><path d="M862.9 484 V489.2" stroke="#38383b"/><path d="M881.7 484 V489.2" stroke="#38383b"/><path d="M900.5 484 V489.2" stroke="#38383b"/><path d="M919.3 484 V493.6" stroke="#56565a"/><path d="M956.9 484 V489.2" stroke="#38383b"/><path d="M975.7 484 V489.2" stroke="#38383b"/><path d="M994.5 484 V489.2" stroke="#38383b"/><path d="M1013.3 484 V489.2" stroke="#38383b"/><path d="M1032.1 484 V489.2" stroke="#38383b"/><path d="M1050.9 484 V489.2" stroke="#38383b"/><path d="M1069.7 484 V489.2" stroke="#38383b"/><path d="M1088.5 484 V489.2" stroke="#38383b"/><path d="M1107.3 484 V493.6" stroke="#56565a"/><path d="M1144.9 484 V489.2" stroke="#38383b"/></svg>
<div class="t" style="left:171.3px;top:482.9px;font-size:10.4px;color:#5e5e62;letter-spacing:-.15px">00:00</div>
<div class="t" style="left:359.3px;top:482.9px;font-size:10.4px;color:#5e5e62;letter-spacing:-.15px">00:10</div>
<div class="t" style="left:547.3px;top:482.9px;font-size:10.4px;color:#5e5e62;letter-spacing:-.15px">00:20</div>
<div class="t" style="left:735.3px;top:482.9px;font-size:10.4px;color:#5e5e62;letter-spacing:-.15px">00:30</div>
<div class="t" style="left:923.3px;top:482.9px;font-size:10.4px;color:#5e5e62;letter-spacing:-.15px">00:40</div>
<div class="t" style="left:1111.3px;top:482.9px;font-size:10.4px;color:#5e5e62;letter-spacing:-.15px">00:50</div>
<div class="abs" style="left:166px;top:542.5px;width:985.5px;height:61px;background:#242426;border-top:1px solid #2b2b2d;border-bottom:1px solid #2b2b2d"></div>
<div class="abs" style="left:166px;top:604px;width:985.5px;height:80px;background:#1f1f20"></div>
<div class="abs" style="left:13px;top:561px;width:96px;height:24px;border-radius:5px;background:#202022"></div>
<svg style="left:0;top:561px" width="120" height="24" viewBox="0 561 120 24" fill="none"><rect x="19.5" y="568.1999999999999" width="11.2" height="9.4" stroke="#4d4d51" stroke-width="1"/><path d="M23.6 571.0 L26.6 572.9 L23.6 574.8Z" fill="#4d4d51"/><circle cx="49" cy="572.9" r="7.8" fill="#2c2c2f"/><circle cx="73" cy="572.9" r="7.8" fill="#2c2c2f"/><circle cx="97" cy="572.9" r="7.8" fill="#2c2c2f"/><g stroke="#ededee" stroke-width="1.3"><rect x="45.6" y="573.0" width="7" height="3.9" rx=".6"/><path d="M47.1 572.9 V571.3 A2.1 2.1 0 0 1 51.3 571.1 V571.6999999999999"/></g><g stroke="#ededee" stroke-width="1.2"><path d="M67.8 573.0 C70 568.9 76 568.9 78.2 573.0 C76 577.1 70 577.1 67.8 573.0Z"/><circle cx="73" cy="573.0" r="1.9"/></g><g stroke="#ededee" stroke-width="1.2" stroke-linejoin="round"><path d="M92.3 571.1 H94.4 L97 568.9 V576.9 L94.4 574.6999999999999 H92.3Z"/><path d="M99 570.9 C99.8 572.1 99.8 573.6999999999999 99 574.9 M100.9 569.5 C102.4 571.6999999999999 102.4 574.1 100.9 576.3"/></g></svg>
<div class="abs" style="left:13px;top:634.5px;width:96px;height:24px;border-radius:5px;background:#202022"></div>
<svg style="left:0;top:634.5px" width="120" height="24" viewBox="0 634.5 120 24" fill="none"><rect x="19.5" y="641.6999999999999" width="11.2" height="9.4" stroke="#4d4d51" stroke-width="1"/><path d="M23.6 644.5 L26.6 646.4 L23.6 648.3Z" fill="#4d4d51"/><circle cx="49" cy="646.4" r="7.8" fill="#2c2c2f"/><circle cx="73" cy="646.4" r="7.8" fill="#2c2c2f"/><circle cx="97" cy="646.4" r="7.8" fill="#2c2c2f"/><g stroke="#ededee" stroke-width="1.3"><rect x="45.6" y="646.5" width="7" height="3.9" rx=".6"/><path d="M47.1 646.4 V644.8 A2.1 2.1 0 0 1 51.3 644.6 V645.1999999999999"/></g><g stroke="#ededee" stroke-width="1.2"><path d="M67.8 646.5 C70 642.4 76 642.4 78.2 646.5 C76 650.6 70 650.6 67.8 646.5Z"/><circle cx="73" cy="646.5" r="1.9"/></g><g stroke="#ededee" stroke-width="1.2" stroke-linejoin="round"><path d="M92.3 644.6 H94.4 L97 642.4 V650.4 L94.4 648.1999999999999 H92.3Z"/><path d="M99 644.4 C99.8 645.6 99.8 647.1999999999999 99 648.4 M100.9 643.0 C102.4 645.1999999999999 102.4 647.6 100.9 649.8"/></g></svg>
<div class="abs" style="left:121px;top:627px;width:38px;height:38px;border-radius:4px;background:#2c2c2e;border:1px dashed #3c3c3f"></div>
<div class="t b" style="left:128px;top:640px;font-size:12px;color:#ececee">封面</div>
<div class="abs" style="left:164px;top:544px;width:100px;height:58px;background:#fff;border-radius:3.5px"></div>
<div class="abs" style="left:167px;top:545.3px;width:94px;height:55.5px;background:#064c52;overflow:hidden">
 <div class="abs" style="left:4.3px;top:1.5px;width:43.5px;height:13.6px;border-radius:2px;background:#1d5b60"></div>
 <div class="abs" style="left:57px;top:1.5px;width:40px;height:13.6px;border-radius:2px;background:#1d5b60"></div>
 <div class="t" style="left:6.6px;top:1.3px;font-size:10.5px;color:#e9f3f4">logo.png</div>
 <div class="t" style="left:59.4px;top:1.3px;font-size:10.5px;color:#e9f3f4;letter-spacing:-.1px">00:00:00:01</div>
 <div class="abs" style="left:0;top:16.4px;width:94px;height:23.4px;background:#fff;overflow:hidden">
  <div class="t" style="left:1.1px;top:1.2px;font-size:17px;line-height:23px;height:23px;font-weight:900;color:#070f3e;-webkit-text-stroke:.2px #070f3e;letter-spacing:-.1px">简鹿办</div>
  <div class="abs" style="left:50px;top:0;width:50px;height:24px;background:#fff"></div>
  <div class="t" style="left:50.6px;top:1.2px;font-size:17px;line-height:23px;height:23px;font-weight:900;color:#070f3e;-webkit-text-stroke:.2px #070f3e;letter-spacing:-.1px">简鹿办</div>
 </div>
 <div class="abs" style="left:0;top:39.8px;width:94px;height:1px;background:#04090a"></div>
</div>
<div class="abs" style="left:167px;top:610px;width:325px;height:72px;background:#064c52;border-radius:3.5px;overflow:hidden">
 <div class="abs" style="left:4px;top:2.8px;width:120px;height:13.4px;border-radius:2px;background:#1d5b60"></div>
 <div class="abs" style="left:132.4px;top:2.8px;width:57.4px;height:13.4px;border-radius:2px;background:#1d5b60"></div>
 <div class="t" style="left:6.6px;top:2.4px;font-size:10.5px;color:#e9f3f4">山区远航航拍视频片段.avi</div>
 <div class="t" style="left:134.4px;top:2.4px;font-size:10.5px;color:#e9f3f4;letter-spacing:-.12px">00:00:17:08</div>
 <div class="abs" style="left:0;top:17.8px;width:49.6px;height:38px;background:#000"></div>
 <svg style="left:49.6px;top:17.8px" width="275.4" height="38.2" viewBox="0 0 275.4 38.2">
<defs>
<filter id="fb" x="-5%" y="-5%" width="110%" height="110%"><feGaussianBlur stdDeviation="1.1"/></filter>
<pattern id="fr" width="49.9" height="38.2" patternUnits="userSpaceOnUse" x="0.6" y="0">
<rect width="49.9" height="38.2" fill="#aa8347"/>
<g filter="url(#fb)">
<path d="M0 8 L30 7 L31 13 L0 16Z" fill="#c3a673"/>
<path d="M0 19 L24 16 L18 30 L0 33Z" fill="#b8965c"/>
<path d="M31 6.5 L42 6.5 L48 38.2 L25 38.2Z" fill="#85612e"/>
<path d="M35.4 6.5 L38.6 6.5 L40.6 38.2 L33 38.2Z" fill="#a37d44"/>
<path d="M43 7 L50 7 L50 22Z" fill="#b8965e"/>
<path d="M2 34 L20 20" stroke="#9a7843" stroke-width="1.6"/>
</g>
<rect width="49.9" height="4.7" fill="#a9c4e8"/><rect y=".8" width="30" height="2.4" fill="#eef3fa" opacity=".7"/><rect x="26" y="2.4" width="23.9" height="2" fill="#eef3fa" opacity=".6"/>
<rect y="4.7" width="49.9" height="1" fill="#5f5a45"/><rect y="5.7" width="49.9" height="1.4" fill="#8d7a55"/>
<rect x="49.4" y="5" width=".5" height="33.2" fill="#7c5f34" opacity=".6"/>
</pattern>
<filter id="nz2" x="0" y="0" width="100%" height="100%"><feTurbulence type="fractalNoise" baseFrequency="0.45 0.7" numOctaves="2" seed="3" result="n"/><feColorMatrix in="n" type="matrix" values="0 0 0 0 .3  0 0 0 0 .2  0 0 0 0 .08  0 0 0 -2.4 1.3"/></filter>
<filter id="nl2" x="0" y="0" width="100%" height="100%"><feTurbulence type="fractalNoise" baseFrequency="0.3 0.6" numOctaves="2" seed="9" result="n"/><feColorMatrix in="n" type="matrix" values="0 0 0 0 .88  0 0 0 0 .8  0 0 0 0 .62  0 0 0 2.6 -1.5"/></filter>
</defs>
<rect width="275.4" height="38.2" fill="url(#fr)"/>
<rect y="7" width="275.4" height="31.2" filter="url(#nz2)" opacity=".55"/>
<rect y="7" width="275.4" height="31.2" filter="url(#nl2)" opacity=".28"/>
<g fill="#23262c"><rect x="10" y="22" width="8.6" height="6.6" rx="1.2"/><rect x="75.8" y="17.6" width="4.4" height="5.4" rx=".8"/><rect x="126.2" y="26" width="5.4" height="5.4" rx=".8"/><rect x="180.6" y="22.6" width="3.6" height="4.4" rx=".6"/><rect x="233" y="15" width="2.4" height="4" rx=".5"/><rect x="183.6" y="14.6" width="1.6" height="2.4"/><rect x="133.6" y="11" width="1.6" height="2.4"/><rect x="33" y="10" width="2" height="2"/></g>
<rect x="11" y="21" width="4" height="2.4" fill="#dfe3e8"/><rect x="127" y="25.6" width="3.6" height="1.6" fill="#c9d0d8"/>
<path d="M53 38.2 L56 35.4 L64 35 L66 38.2Z" fill="#2a2e36"/><rect x="57" y="34.6" width="6" height="1.4" fill="#c9d0d8"/>
<rect x="226.6" y="36.6" width="3.4" height="1.6" fill="#e8ecf0"/>
</svg>
 <div class="abs" style="left:0;top:64.3px;width:325px;height:1px;background:#4f8a8e"></div>
</div>
<div class="abs" style="left:215.1px;top:496px;width:1.7px;height:272.5px;background:#acacae"></div>
<svg style="left:210px;top:483px" width="12" height="16" viewBox="210 483 12 16"><path d="M211.8 487 A2.2 2.2 0 0 1 214 484.8 H217.8 A2.2 2.2 0 0 1 220 487 V492.6 C220 494.8 217.4 496.2 215.9 497.4 C214.4 496.2 211.8 494.8 211.8 492.6 Z" fill="#1d1d1f" stroke="#fafafa" stroke-width="1.8" stroke-linejoin="round"/></svg>
<div class="abs" style="left:119px;top:770px;width:1031px;height:6px;border-radius:3px;background:#36363b"></div>
</div>
</div>
</body>
</html>
